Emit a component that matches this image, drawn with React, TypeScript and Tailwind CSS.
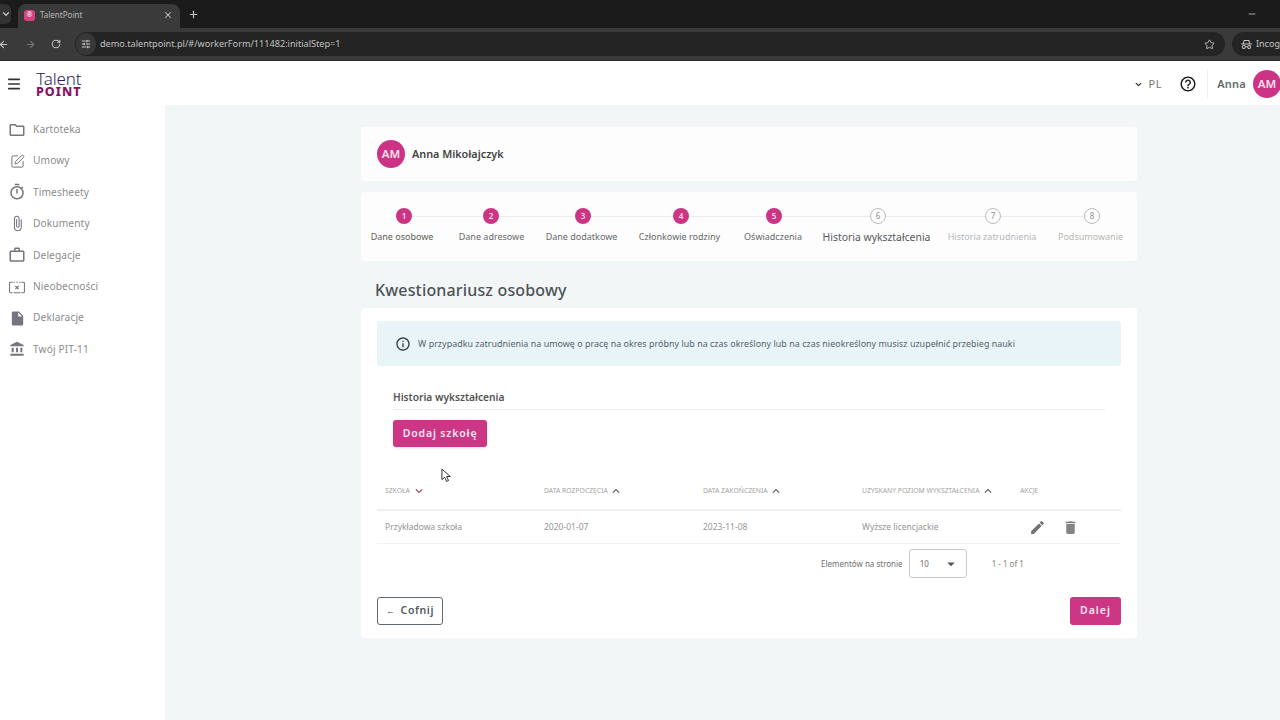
import { ArrowLeft, ArrowRight, ChevronDown, Menu, Minus, Plus, RotateCw, SlidersHorizontal, SquarePen, Star, X } from 'lucide-react';
import {
  MdAccountBalance,
  MdArrowDropDown,
  MdAttachFile,
  MdDelete,
  MdEdit,
  MdHelpOutline,
  MdInfoOutline,
  MdInsertDriveFile,
  MdKeyboardArrowDown,
  MdKeyboardArrowUp,
  MdOutlineFolder,
  MdOutlineTimer,
  MdOutlineWorkOutline,
} from 'react-icons/md';

function AbsenceIcon({ className }: { className?: string }) {
  return (
    <svg viewBox="0 0 18 16" className={className} fill="none" stroke="currentColor" strokeWidth="1.2">
      <path d="M4 2.5H1.5a1 1 0 0 0-1 1v10a1 1 0 0 0 1 1H4M14 2.5h2.5a1 1 0 0 1 1 1v10a1 1 0 0 1-1 1H14" />
      <path d="M5 2.5h1.5M8.2 2.5h1.6M11.5 2.5H13M5 14.5h8" />
      <path d="M7.2 6.8l3.6 3.6M10.8 6.8l-3.6 3.6" strokeWidth="1.4" />
    </svg>
  );
}

const menu = [
  { label: 'Kartoteka', icon: <MdOutlineFolder className="h-[18px] w-[18px]" /> },
  { label: 'Umowy', icon: <SquarePen className="h-[15px] w-[15px]" strokeWidth={1.6} /> },
  { label: 'Timesheety', icon: <MdOutlineTimer className="h-[18px] w-[18px]" /> },
  { label: 'Dokumenty', icon: <MdAttachFile className="h-[17px] w-[17px]" /> },
  { label: 'Delegacje', icon: <MdOutlineWorkOutline className="h-[18px] w-[18px]" /> },
  { label: 'Nieobecności', icon: <AbsenceIcon className="h-[14px] w-[16px]" /> },
  { label: 'Deklaracje', icon: <MdInsertDriveFile className="h-[17px] w-[17px]" /> },
  { label: 'Twój PIT-11', icon: <MdAccountBalance className="h-[16px] w-[16px]" /> },
];

const steps = [
  { n: 1, label: 'Dane osobowe', line: 'w-[71px]', col: 'w-[62px] ml-[10px]', text: 'text-[#5f5f55] text-[9px]', done: true },
  { n: 2, label: 'Dane adresowe', line: 'w-[76px]', col: 'w-[67px] ml-[25px]', text: 'text-[#66696c] text-[9px]', done: true },
  { n: 3, label: 'Dane dodatkowe', line: 'w-[82px]', col: 'w-[71px] ml-[21px]', text: 'text-[#66696c] text-[9px]', done: true },
  { n: 4, label: 'Członkowie rodziny', line: 'w-[77px]', col: 'w-[83px] ml-[21px]', text: 'text-[#66696c] text-[9px]', done: true },
  { n: 5, label: 'Oświadczenia', line: 'w-[88px]', col: 'w-[58px] ml-[23px]', text: 'text-[#66696c] text-[9px]', done: true },
  { n: 6, label: 'Historia wykształcenia', line: 'w-[99px]', col: 'w-[107px] ml-[21px]', text: 'text-[#55585c] text-[10.4px]', done: false },
  { n: 7, label: 'Historia zatrudnienia', line: 'w-[83px]', col: 'w-[88px] ml-[18px]', text: 'text-[#b4b7ba] text-[9px]', done: false },
  { n: 8, label: 'Podsumowanie', line: 'w-0', col: 'w-[65px] ml-[22px]', text: 'text-[#b9bab2] text-[9px]', done: false },
];

const columns = [
  { label: 'SZKOŁA', w: 'w-[159px]', down: true },
  { label: 'DATA ROZPOCZĘCIA', w: 'w-[159px]' },
  { label: 'DATA ZAKOŃCZENIA', w: 'w-[159px]' },
  { label: 'UZYSKANY POZIOM WYKSZTAŁCENIA', w: 'w-[158px]' },
  { label: 'AKCJE', w: 'w-[100px]', plain: true },
];

function BrowserBar() {
  return (
    <div className="shrink-0 bg-[#3a3a3a] text-[#c4c4c4]">
      <div className="flex h-[28px] items-end bg-[#1b1b1b]">
        <div className="mb-[4px] flex h-[20px] w-[11px] items-center justify-center rounded-r-md bg-[#333333]">
          <ChevronDown className="h-[10px] w-[10px]" strokeWidth={3} />
        </div>
        <div className="ml-[7px] flex h-[24px] w-[162px] items-center rounded-t-lg bg-[#3a3a3a] pb-[2px] pl-[6px] pr-[7px]">
          <span className="flex h-[11px] w-[11px] items-center justify-center rounded-[3px] bg-[#d9407f] text-[7px] text-white">®</span>
          <span className="ml-[5px] flex-1 text-[8px] text-[#b8b8b8]">TalentPoint</span>
          <X className="h-[10px] w-[10px]" strokeWidth={2.5} />
        </div>
        <Plus className="mb-[8px] ml-[8px] h-[11px] w-[11px]" strokeWidth={2.5} />
        <Minus className="mb-[9px] ml-auto mr-[23px] h-[10px] w-[10px]" />
      </div>
      <div className="flex h-[33px] items-center border-b border-[#2a2a2a]">
        <ArrowLeft className="-ml-[2px] h-[11px] w-[11px]" strokeWidth={2.5} />
        <ArrowRight className="ml-[16px] h-[11px] w-[11px] text-[#767676]" strokeWidth={2.5} />
        <RotateCw className="ml-[15px] h-[10px] w-[10px]" strokeWidth={2.5} />
        <div className="ml-[14px] flex h-[24px] w-[1150px] items-center rounded-full bg-[#242424] pr-[10px]">
          <span className="ml-[1px] flex h-[22px] w-[20px] items-center justify-center rounded-full bg-[#383838]">
            <SlidersHorizontal className="h-[10px] w-[10px]" strokeWidth={2.5} />
          </span>
          <span className="ml-[4px] flex-1 text-[9.15px] text-[#c2c2c2]">demo.talentpoint.pl/#/workerForm/111482:initialStep=1</span>
          <Star className="h-[11px] w-[11px]" strokeWidth={2} />
        </div>
        <div className="ml-[7px] flex h-[24px] flex-1 items-center overflow-hidden rounded-l-full bg-[#242424] pl-[9px] text-[9px]">
          <svg viewBox="0 0 14 12" className="h-[11px] w-[11px] shrink-0" fill="none" stroke="currentColor" strokeWidth="1.3">
            <path d="M0 5.5h14M3 5l1-4h6l1 4" />
            <circle cx="3.6" cy="9.2" r="1.9" />
            <circle cx="10.4" cy="9.2" r="1.9" />
            <path d="M5.5 9h3" />
          </svg>
          <span className="ml-[4px] whitespace-nowrap">Incognito</span>
        </div>
      </div>
    </div>
  );
}

function Header() {
  return (
    <header className="flex h-[44px] shrink-0 items-center bg-white pl-[6px] pt-[2px]">
      <Menu className="h-[16px] w-[16px] text-[#333333]" strokeWidth={2.4} />
      <div className="ml-[14px] flex flex-col items-center">
        <span className="text-[17px] font-light leading-[15px] tracking-[-0.01em] text-[#2a2550]">Talent</span>
        <span className="text-[12.5px] font-extrabold leading-[11px] tracking-[0.08em] text-[#8a1263]">POINT</span>
      </div>
      <div className="ml-auto flex items-center">
        <ChevronDown className="h-[9px] w-[9px] text-[#333333]" strokeWidth={3.5} />
        <span className="ml-[6px] text-[11px] tracking-[0.06em] text-[#77776a]">PL</span>
        <MdHelpOutline className="ml-[17px] h-[18px] w-[18px] text-[#222222]" />
        <span className="ml-[10px] h-[30px] w-px bg-[#eeeeee]" />
        <span className="ml-[9px] text-[11px] font-semibold tracking-[0.02em] text-[#66696c]">Anna</span>
        <span className="-mr-[1px] ml-[7px] flex h-[28px] w-[28px] items-center justify-center rounded-full bg-[#cc3384] text-[11.5px] font-semibold text-[#fbe4f0]">AM</span>
      </div>
    </header>
  );
}

function Sidebar() {
  return (
    <aside className="w-[165px] shrink-0 bg-white pt-[9px]">
      {menu.map((item) => (
        <div key={item.label} className="flex h-[31.4px] items-center">
          <span className="flex w-[33px] shrink-0 justify-center pl-[1px] text-[#75757e]">{item.icon}</span>
          <span className="text-[10.2px] tracking-[0.01em] text-[#8b8b8b]">{item.label}</span>
        </div>
      ))}
    </aside>
  );
}

function Stepper() {
  return (
    <div className="mt-[11px] h-[69px] rounded-sm bg-[#fdfdfd] pt-[16px]">
      <div className="flex items-center pl-[35px]">
        {steps.map((s) => (
          <div key={s.n} className="flex items-center">
            {s.done ? (
              <span className="flex h-[16px] w-[16px] items-center justify-center rounded-full bg-[#cb3584] text-[8px] font-semibold text-[#fbdcec]">{s.n}</span>
            ) : (
              <span className="flex h-[16px] w-[16px] items-center justify-center rounded-full border border-[#bcbcbc] text-[8px] text-[#8f8f8f]">{s.n}</span>
            )}
            <span className={`h-px bg-[#ececec] ${s.line}`} />
          </div>
        ))}
      </div>
      <div className="mt-[6px] flex items-center">
        {steps.map((s) => (
          <div key={s.n} className={`flex shrink-0 justify-center whitespace-nowrap leading-[14px] ${s.col} ${s.text}`}>
            {s.label}
          </div>
        ))}
      </div>
    </div>
  );
}

function EducationTable() {
  return (
    <div className="mt-[26px]">
      <div className="flex h-[38px] items-center border-b-2 border-[#f0f0f0] pl-[8px]">
        {columns.map((c) => (
          <div key={c.label} className={`flex shrink-0 items-center whitespace-nowrap text-[6.8px] text-[#a3a3a3] ${c.w}`}>
            {c.label}
            {c.down && <MdKeyboardArrowDown className="ml-[2px] h-[14px] w-[14px] text-[#9c3a5e]" />}
            {!c.down && !c.plain && <MdKeyboardArrowUp className="ml-[1px] h-[14px] w-[14px] text-[#555555]" />}
          </div>
        ))}
      </div>
      <div className="flex h-[33px] items-center border-b border-[#f1f1f1] pl-[8px] text-[8.5px] text-[#959595]">
        <div className="w-[159px] shrink-0">Przykładowa szkoła</div>
        <div className="w-[159px] shrink-0">2020-01-07</div>
        <div className="w-[159px] shrink-0">2023-11-08</div>
        <div className="w-[158px] shrink-0">Wyższe licencjackie</div>
        <div className="flex items-center">
          <MdEdit className="ml-[9px] h-[17px] w-[17px] text-[#727272]" />
          <MdDelete className="ml-[16px] h-[17px] w-[17px] text-[#848484]" />
        </div>
      </div>
      <div className="flex h-[39px] items-center pl-[444px] text-[8px] text-[#707070]">
        <span className="whitespace-nowrap">Elementów na stronie</span>
        <div className="ml-[6px] flex h-[29px] w-[58px] items-center justify-between rounded-[3px] border border-[#c8ccd0] pl-[10px] pr-[6px]">
          10
          <MdArrowDropDown className="h-[18px] w-[18px] text-[#555555]" />
        </div>
        <span className="ml-[25px] text-[#85856f]">1 - 1 of 1</span>
      </div>
    </div>
  );
}

function FormCard() {
  return (
    <div className="rounded-sm bg-white px-[16px] pb-[13px] pt-[13px]">
      <div className="flex h-[45px] items-center rounded-[3px] bg-[#e9f4f8] pl-[18px]">
        <MdInfoOutline className="h-[16px] w-[16px] text-[#333c40]" />
        <span className="ml-[7px] text-[8.9px] tracking-[0.005em] text-[#55626a]">
          W przypadku zatrudnienia na umowę o pracę na okres próbny lub na czas określony lub na czas nieokreślony musisz uzupełnić przebieg nauki
        </span>
      </div>
      <div className="mx-[16px] mt-[24px] border-b border-[#ececec] pb-[4px] text-[10.2px] font-semibold leading-[15px] text-[#555555]">
        Historia wykształcenia
      </div>
      <div className="ml-[16px] mt-[10px] flex h-[27px] w-[94px] items-center justify-center rounded-[3px] bg-[#cd3585] text-[10.5px] font-semibold tracking-[0.08em] text-[#fbe6f1] shadow-sm">
        Dodaj szkołę
      </div>
      <EducationTable />
      <div className="mt-[14px] flex items-center justify-between">
        <div className="flex h-[28px] w-[66px] items-center justify-center rounded-[3px] border border-[#5f6b70] text-[10.5px] font-semibold tracking-[0.06em] text-[#4f5a5f]">
          <span className="mr-[5px] text-[9px]">←</span>Cofnij
        </div>
        <div className="flex h-[28px] w-[51px] items-center justify-center rounded-[3px] bg-[#cd3585] text-[10.5px] font-semibold tracking-[0.1em] text-[#fbe6f1]">
          Dalej
        </div>
      </div>
    </div>
  );
}

export default function App() {
  return (
    <div className="relative flex h-[720px] w-[1280px] flex-col overflow-hidden bg-white font-['Noto_Sans','Open_Sans',sans-serif]">
      <BrowserBar />
      <Header />
      <div className="flex flex-1">
        <Sidebar />
        <main className="flex-1 bg-[#f3f6f7] pt-[22px]">
          <div className="ml-[196px] w-[776px]">
            <div className="flex h-[54px] items-center rounded-sm bg-[#fdfdfd] pl-[16px]">
              <span className="flex h-[28px] w-[28px] items-center justify-center rounded-full bg-[#cc3384] text-[11.5px] font-semibold text-[#fbe4f0]">AM</span>
              <span className="ml-[7px] text-[10.8px] font-semibold text-[#444444]">Anna Mikołajczyk</span>
            </div>
            <Stepper />
            <h1 className="ml-[14px] flex h-[47px] items-center pt-[10px] text-[16px] font-medium tracking-[0.01em] text-[#4c5256]">Kwestionariusz osobowy</h1>
            <FormCard />
          </div>
        </main>
      </div>
      <svg viewBox="0 0 12 16" className="absolute left-[441px] top-[468px] h-[15px] w-[11px]" fill="#ffffff" stroke="#222222" strokeWidth="1">
        <path d="M1 1v11.5l3-2.6 2 4.6 2.2-1-2-4.4h4z" />
      </svg>
    </div>
  );
}
